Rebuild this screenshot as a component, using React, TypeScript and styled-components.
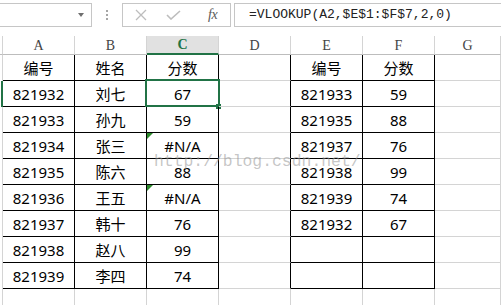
import React from 'react'
import styled, { createGlobalStyle, css } from 'styled-components'

const GlobalStyle = createGlobalStyle`
  html, body {
    margin: 0;
    padding: 0;
    background: #ffffff;
    overflow: hidden;
  }
`

const GREEN = '#217346'
const GRID = '#d4d4d4'

const cols = ['A', 'B', 'C', 'D', 'E', 'F', 'G']

const data: string[][] = [
  ['编号', '姓名', '分数', '', '编号', '分数', ''],
  ['821932', '刘七', '67', '', '821933', '59', ''],
  ['821933', '孙九', '59', '', '821935', '88', ''],
  ['821934', '张三', '#N/A', '', '821937', '76', ''],
  ['821935', '陈六', '88', '', '821938', '99', ''],
  ['821936', '王五', '#N/A', '', '821939', '74', ''],
  ['821937', '韩十', '76', '', '821932', '67', ''],
  ['821938', '赵八', '99', '', '', '', ''],
  ['821939', '李四', '74', '', '', '', ''],
  ['', '', '', '', '', '', ''],
]

const inTable = (c: number, r: number) =>
  r >= 1 && r <= 9 && (c <= 2 || c === 4 || c === 5)

const Window = styled.div`
  position: relative;
  width: 501px;
  height: 305px;
  overflow: hidden;
  background: #fff;
`

const FormulaBar = styled.div`
  display: flex;
  align-items: flex-start;
  height: 36px;
  padding-top: 3px;
  box-sizing: border-box;
`

const NameBox = styled.div`
  width: 92px;
  height: 24px;
  box-sizing: border-box;
  border: 1px solid #c6c6c6;
  border-left: none;
  display: flex;
  align-items: center;
  justify-content: flex-end;
  padding-right: 7px;
`

const DropArrow = styled.div`
  width: 0;
  height: 0;
  border-left: 3.5px solid transparent;
  border-right: 3.5px solid transparent;
  border-top: 4px solid #6f6f6f;
`

const Grip = styled.div`
  width: 30px;
  height: 24px;
  display: flex;
  flex-direction: column;
  align-items: center;
  justify-content: center;
  gap: 2px;

  span {
    width: 2px;
    height: 2px;
    background: #a6a6a6;
  }
`

const ButtonBox = styled.div`
  width: 109px;
  height: 24px;
  box-sizing: border-box;
  border: 1px solid #c6c6c6;
  display: flex;
  align-items: center;
  padding-left: 12px;
  gap: 19px;
`

const FxLabel = styled.span`
  font-family: 'Liberation Serif', serif;
  font-style: italic;
  font-size: 14px;
  color: #5a5a5a;
  letter-spacing: -0.5px;
  margin-left: 8px;
`

const FormulaBox = styled.div`
  flex: 1;
  height: 24px;
  margin-left: 3px;
  box-sizing: border-box;
  border: 1px solid #c6c6c6;
  border-right: none;
  padding-left: 14px;
  font-family: 'Liberation Mono', monospace;
  font-size: 13px;
  line-height: 22px;
  color: #222;
  white-space: nowrap;
`

const Sheet = styled.div`
  display: grid;
  grid-template-columns: 3px repeat(6, 72px) 1fr;
  grid-template-rows: 19px repeat(10, 26px);
`

const Corner = styled.div`
  border-right: 1px solid ${GRID};
  border-bottom: 1px solid #bdbdbd;
`

const ColHeader = styled.div<{ $active?: boolean }>`
  box-sizing: border-box;
  border-right: 1px solid ${GRID};
  border-bottom: 1px solid #bdbdbd;
  font-family: 'Liberation Serif', serif;
  font-size: 14px;
  line-height: 19px;
  text-align: center;
  color: #444;
  ${(p) =>
    p.$active &&
    css`
      background: #e1e1e1;
      border-bottom: 2px solid ${GREEN};
      color: ${GREEN};
      font-weight: bold;
      line-height: 18px;
    `}
`

const RowHeader = styled.div<{ $selected?: boolean }>`
  box-sizing: border-box;
  border-right: ${(p) => (p.$selected ? `2px solid ${GREEN}` : `1px solid ${GRID}`)};
`

const Cell = styled.div<{ $darkRight: boolean; $darkBottom: boolean }>`
  position: relative;
  box-sizing: border-box;
  border-right: 1px solid ${(p) => (p.$darkRight ? '#000' : GRID)};
  border-bottom: 1px solid ${(p) => (p.$darkBottom ? '#000' : GRID)};
  font-family: 'Noto Sans', 'Noto Sans CJK SC', sans-serif;
  font-size: 15px;
  line-height: 26px;
  text-align: center;
  color: #000;
  white-space: nowrap;
`

const Selection = styled.div`
  position: absolute;
  left: -2px;
  top: -2px;
  width: 75px;
  height: 28px;
  box-sizing: border-box;
  border: 2px solid ${GREEN};
  pointer-events: none;
`

const FillHandle = styled.div`
  position: absolute;
  left: 69px;
  top: 23px;
  width: 5px;
  height: 5px;
  background: ${GREEN};
`

const ErrorMark = styled.div`
  position: absolute;
  left: 0;
  top: 0;
  width: 0;
  height: 0;
  border-top: 6px solid #2c8a2c;
  border-right: 6px solid transparent;
`

const Watermark = styled.div`
  position: absolute;
  left: 154px;
  top: 152px;
  font-family: 'Liberation Mono', monospace;
  font-size: 16.4px;
  color: rgba(150, 150, 150, 0.55);
  white-space: nowrap;
  pointer-events: none;
`

const CrossIcon = () => (
  <svg width="12" height="12" viewBox="0 0 12 12">
    <path d="M1 1 L11 11 M11 1 L1 11" stroke="#bdbdbd" strokeWidth="1.3" fill="none" />
  </svg>
)

const CheckIcon = () => (
  <svg width="15" height="10" viewBox="0 0 15 10">
    <path d="M1 5 L5 9 L14 1" stroke="#bdbdbd" strokeWidth="1.6" fill="none" />
  </svg>
)

export default function App() {
  return (
    <Window>
      <GlobalStyle />
      <FormulaBar>
        <NameBox>
          <DropArrow />
        </NameBox>
        <Grip>
          <span />
          <span />
          <span />
        </Grip>
        <ButtonBox>
          <CrossIcon />
          <CheckIcon />
          <FxLabel>fx</FxLabel>
        </ButtonBox>
        <FormulaBox>=VLOOKUP(A2,$E$1:$F$7,2,0)</FormulaBox>
      </FormulaBar>

      <Sheet>
        <Corner />
        {cols.map((c) => (
          <ColHeader key={c} $active={c === 'C'}>
            {c}
          </ColHeader>
        ))}
        {data.map((row, ri) => {
          const r = ri + 1
          return (
            <React.Fragment key={r}>
              <RowHeader $selected={r === 2} />
              {row.map((v, ci) => (
                <Cell
                  key={ci}
                  $darkRight={inTable(ci, r) || inTable(ci + 1, r)}
                  $darkBottom={inTable(ci, r)}
                >
                  {v}
                  {v === '#N/A' && <ErrorMark />}
                  {r === 2 && ci === 2 && (
                    <>
                      <Selection />
                      <FillHandle />
                    </>
                  )}
                </Cell>
              ))}
            </React.Fragment>
          )
        })}
      </Sheet>

      <Watermark>http://blog.csdn.net/</Watermark>
    </Window>
  )
}
